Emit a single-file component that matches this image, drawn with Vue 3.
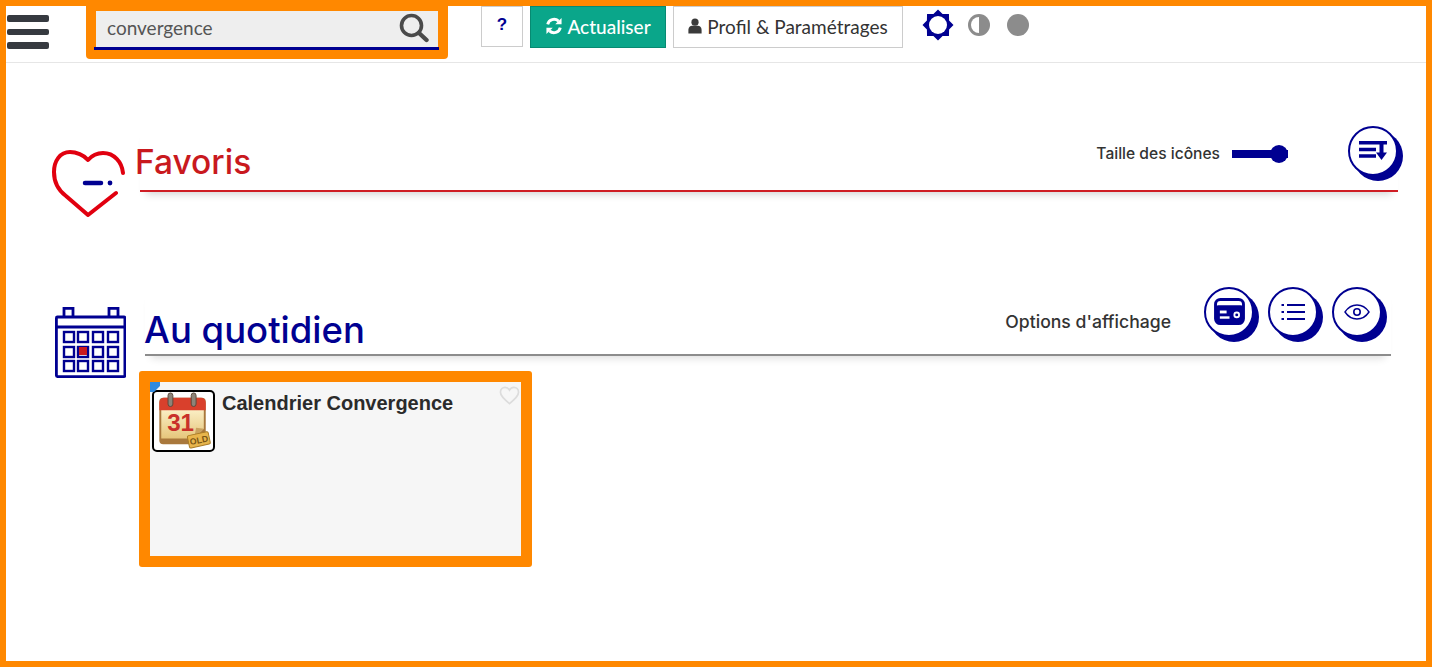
<template>
  <div class="page">
    <header class="topbar">
      <button class="burger" aria-label="Menu">
        <span></span><span></span><span></span>
      </button>
      <div class="search-focus">
        <div class="search">
          <div class="search-inner">
            <span class="search-text">convergence</span>
            <svg class="search-icon" viewBox="0 0 30 30" width="30" height="30">
              <circle cx="12.5" cy="12.5" r="10" fill="none" stroke="#4a4a4a" stroke-width="3.6" />
              <path d="M20 20l7.5 7" stroke="#4a4a4a" stroke-width="4.4" stroke-linecap="round" />
            </svg>
          </div>
        </div>
      </div>
      <button class="btn btn-help">?</button>
      <button class="btn btn-refresh">
        <svg viewBox="0 0 20 20" width="18" height="18">
          <path d="M3 8.2a7.2 7.2 0 0 1 12-3.6" fill="none" stroke="#fff" stroke-width="3.2" />
          <path d="M18.4 1v7h-7z" fill="#fff" />
          <path d="M17 11.8a7.2 7.2 0 0 1-12 3.6" fill="none" stroke="#fff" stroke-width="3.2" />
          <path d="M1.6 19v-7h7z" fill="#fff" />
        </svg>
        Actualiser
      </button>
      <button class="btn btn-profile">
        <svg viewBox="0 0 14 16" width="14" height="16">
          <circle cx="7" cy="4.2" r="3.6" fill="#3a3a3a" />
          <path d="M0.4 15.4v-3.6c0-2.6 2-4 3.6-4h6c1.600 0 3.600 1.400 3.600 4v3.600z" fill="#3a3a3a" />
        </svg>
        Profil &amp; Paramétrages
      </button>
      <div class="themes">
        <svg viewBox="0 0 32 32" width="32" height="32">
          <polygon :points="sunPoints" fill="#000091" />
          <circle cx="16" cy="16" r="9" fill="#fff" />
        </svg>
        <svg class="contrast" viewBox="0 0 22 22" width="22" height="22">
          <circle cx="11" cy="11" r="11" fill="#8c8c8c" />
          <path d="M11 3a8 8 0 0 0 0 16z" fill="#fff" />
        </svg>
        <span class="dot"></span>
      </div>
    </header>

    <section class="fav">
      <svg class="fav-icon" viewBox="0 0 73 67" width="73" height="67">
        <path
          d="M71 23C70 12 62 3 51 3c-6 0-11 2.500-15 7C32 5 24 2 18 2 8 2 2 11 2 22c0 10 4 18 12 24l22 19 28-22"
          fill="none"
          stroke="#e1000f"
          stroke-width="4"
          stroke-linecap="round"
          stroke-linejoin="round"
        />
        <path d="M33 33h16" stroke="#000091" stroke-width="4.500" stroke-linecap="round" />
        <circle cx="58" cy="33" r="2.400" fill="#000091" />
      </svg>
      <div class="head head-red">
        <h2 class="title-red">Favoris</h2>
        <div class="size-tool">
          <span class="label">Taille des icônes</span>
          <div class="slider"><i></i></div>
        </div>
        <button class="round round-sort" aria-label="Trier">
          <svg viewBox="0 0 28 19" width="28" height="19">
            <path d="M0 1.700h28M0 8.500h17M0 15h17" stroke="#000091" stroke-width="3.400" />
            <path d="M22.500 3v10" stroke="#000091" stroke-width="4" />
            <path d="M17 11.500h11L22.500 19z" fill="#000091" />
          </svg>
        </button>
      </div>
    </section>

    <section class="daily">
      <svg class="cal-icon" viewBox="0 0 71 71" width="71" height="71">
        <g fill="none" stroke="#000091" stroke-width="2.800">
          <rect x="1.400" y="10" width="68.500" height="59.600" rx="1" />
          <path d="M1.400 20h68.500" />
          <path d="M9 10V1.400h9V10M54 10V1.400h9V10" />
          <g stroke-width="2.400">
            <rect v-for="c in cells" :key="c.id" :x="c.x" :y="c.y" width="10" height="10" />
          </g>
        </g>
        <rect x="24" y="40" width="8" height="8" fill="#c9191e" />
      </svg>
      <div class="head head-grey">
        <h2 class="title-blue">Au quotidien</h2>
        <span class="label label-options">Options d'affichage</span>
        <div class="rounds">
          <button class="round" aria-label="Cartes">
            <svg viewBox="0 0 32 28" width="31" height="27">
              <rect x="1.500" y="1.500" width="29" height="25" rx="5" fill="none" stroke="#000091" stroke-width="3" />
              <rect x="1.500" y="7.500" width="29" height="19" rx="3" fill="#000091" />
              <rect x="6" y="13" width="7" height="3" fill="#fff" />
              <rect x="6" y="19" width="10" height="2.500" fill="#fff" />
              <circle cx="23.500" cy="17.500" r="3.400" fill="#fff" />
              <circle cx="23.500" cy="17.500" r="1.500" fill="#000091" />
            </svg>
          </button>
          <button class="round" aria-label="Liste">
            <svg viewBox="0 0 24 18" width="24" height="18">
              <path d="M6 2h18M6 9h18M6 16h18" stroke="#000091" stroke-width="2" />
              <path d="M0.500 2h2.500M0.500 9h2.500M0.500 16h2.500" stroke="#000091" stroke-width="2" />
            </svg>
          </button>
          <button class="round" aria-label="Aperçu">
            <svg viewBox="0 0 26 16" width="26" height="16">
              <path d="M1 8c3-4.500 7-7 12-7s9 2.500 12 7c-3 4.500-7 7-12 7S4 12.500 1 8z" fill="none" stroke="#000091" stroke-width="1.400" />
              <circle cx="13" cy="8" r="3.200" fill="none" stroke="#000091" stroke-width="1.600" />
            </svg>
          </button>
        </div>
      </div>
    </section>

    <article class="card-focus">
      <div class="card">
        <i class="corner"></i>
        <div class="app-icon">
          <svg viewBox="0 0 60 60" width="59" height="58">
            <defs>
              <linearGradient id="paper" x1="0" y1="0" x2="0" y2="1">
                <stop offset="0" stop-color="#fbf0c8" />
                <stop offset="1" stop-color="#e6c67c" />
              </linearGradient>
            </defs>
            <rect x="5" y="6" width="48" height="48" rx="4" fill="#a9783c" />
            <path d="M7 17h44v21L41 48H7z" fill="url(#paper)" />
            <path d="M41 48l2-11 8 1z" fill="#c9a25f" />
            <path d="M5 19v-8a5 5 0 0 1 5-5h38a5 5 0 0 1 5 5v8z" fill="#d9402c" />
            <rect x="14" y="1" width="5" height="14" rx="2.500" fill="#8d8478" stroke="#5b4a3c" />
            <rect x="38" y="1" width="5" height="14" rx="2.500" fill="#8d8478" stroke="#5b4a3c" />
            <text x="27" y="40" text-anchor="middle" class="day">31</text>
            <g transform="rotate(-12 46 50)">
              <rect x="35" y="43" width="22" height="13" rx="1.500" fill="#e8b54c" stroke="#a97b26" />
              <text x="46" y="53" text-anchor="middle" class="old">OLD</text>
            </g>
          </svg>
        </div>
        <h3 class="card-title">Calendrier Convergence</h3>
        <svg class="card-heart" viewBox="0 0 22 20" width="21" height="19">
          <path
            d="M11 18.500C5 13.500 1.500 10.500 1.500 6.500 1.500 3.500 3.800 1.500 6.300 1.500c2 0 3.700 1 4.700 2.800 1-1.800 2.700-2.800 4.700-2.800 2.500 0 4.800 2 4.800 5 0 4-3.500 7-9.500 12z"
            fill="none"
            stroke="#dcdcdc"
            stroke-width="1.800"
          />
        </svg>
      </div>
    </article>
  </div>
</template>

<script setup>
const xs = [9, 23, 38, 53]
const ys = [25, 40, 54]
const cells = ys.flatMap((y, r) => xs.map((x, c) => ({ id: r + "-" + c, x, y })))

// 8 spikes, so 16 points around the centre
const sunPoints = Array.from({ length: 16 }, (_, i) => {
  const r = i % 2 === 0 ? 15.5 : 12
  const a = (i * Math.PI) / 8 - Math.PI / 2
  return (16 + r * Math.cos(a)).toFixed(2) + "," + (16 + r * Math.sin(a)).toFixed(2)
}).join(" ")
</script>

<style>
html,
body {
  margin: 0;
  background: #fff;
}
</style>

<style scoped>
.page {
  box-sizing: border-box;
  width: 1432px;
  height: 667px;
  border: 6px solid #ff8800;
  background: #fff;
  overflow: hidden;
  font-family: Lato, "Liberation Sans", sans-serif;
  color: #2f2f2f;
}

button {
  font-family: inherit;
  padding: 0;
  cursor: pointer;
}

.topbar {
  display: flex;
  align-items: flex-start;
  height: 56px;
  border-bottom: 1px solid #e6e6e6;
}

.burger {
  display: flex;
  flex-direction: column;
  gap: 7px;
  width: 42px;
  margin: 9px 0 0 1px;
  background: none;
  border: none;
}

.burger span {
  display: block;
  height: 6.500px;
  border-radius: 2px;
  background: #363a40;
}

.search-focus {
  box-sizing: border-box;
  width: 362px;
  height: 53px;
  margin: 0 33px 0 37px;
  padding: 5px 9px 9px 8px;
  background: #ff8800;
  border-radius: 0 0 4px 4px;
}

.search {
  box-sizing: border-box;
  height: 39px;
  border-bottom: 3px solid #000091;
}

.search-inner {
  box-sizing: border-box;
  display: flex;
  align-items: center;
  justify-content: space-between;
  height: 36px;
  margin: 0 1px 0 2px;
  padding: 0 9px 3px 11px;
  background: #eeeeee;
}

.search-text {
  font-size: 19px;
  color: #555;
}

.search-icon {
  flex: none;
}

.btn {
  box-sizing: border-box;
  display: flex;
  align-items: center;
  justify-content: center;
  height: 42px;
  padding-bottom: 2px;
  font-size: 19px;
  background: #fff;
  border: 1px solid #cccccc;
}

.btn-help {
  width: 42px;
  height: 41px;
  font-family: "Liberation Sans", sans-serif;
  font-size: 17px;
  font-weight: 700;
  color: #000091;
  padding-bottom: 3px;
}

.btn-refresh {
  width: 136px;
  margin-left: 7px;
  gap: 4px;
  font-weight: 500;
  color: #fff;
  background: #0aa68a;
  border-color: #078a72;
}

.btn-profile {
  width: 230px;
  margin-left: 7px;
  gap: 5px;
  color: #333;
}

.themes {
  display: flex;
  align-items: center;
  height: 38px;
  margin-left: 19px;
}

.contrast {
  margin-left: 14px;
}

.dot {
  width: 22px;
  height: 22px;
  margin-left: 17px;
  border-radius: 50%;
  background: #8c8c8c;
}

.fav {
  display: flex;
  align-items: flex-start;
  margin: 63px 28px 0 46px;
}

.fav-icon {
  flex: none;
  margin-top: 24px;
}

.head {
  flex: 1;
  display: flex;
  align-items: center;
  position: relative;
}

.head-red {
  height: 64px;
  margin-left: 15px;
  border-bottom: 2px solid #cf1d24;
  box-shadow: 0 8px 8px -6px rgba(0, 0, 0, 0.18);
}

.title-red {
  margin: 7px 0 0 -5px;
  font-family: Inter, sans-serif;
  font-size: 33.500px;
  font-weight: 500;
  color: #c9191e;
}

.size-tool {
  display: flex;
  align-items: center;
  gap: 12px;
  margin: -9px 60px 0 auto;
}

.label {
  font-family: Inter, sans-serif;
  font-size: 15.600px;
  font-weight: 500;
  color: #333;
}

.slider {
  position: relative;
  width: 56px;
  height: 8px;
  background: #000091;
}

.slider i {
  position: absolute;
  top: -5px;
  right: 0;
  width: 18px;
  height: 18px;
  border-radius: 50%;
  background: #000091;
}

.round {
  box-sizing: border-box;
  flex: none;
  display: flex;
  align-items: center;
  justify-content: center;
  width: 50px;
  height: 50px;
  background: #fff;
  border: 2px solid #000091;
  border-radius: 50%;
  box-shadow: 5px 5px 0 #000091;
}

.round-sort {
  margin: -3px 0 12px 0;
}

.daily {
  display: flex;
  align-items: flex-start;
  height: 70px;
  margin: 69px 35px 0 49px;
}

.cal-icon {
  flex: none;
  margin-top: 21px;
}

.head-grey {
  height: 68px;
  margin-left: 19px;
  border-bottom: 2px solid #8c8c8c;
  box-shadow: 0 8px 8px -6px rgba(0, 0, 0, 0.14);
}

.title-blue {
  margin: 20px 0 0 -1px;
  font-family: Inter, sans-serif;
  font-size: 36.500px;
  font-weight: 500;
  color: #000091;
}

.label-options {
  margin: 2px 33px 0 auto;
  font-size: 17.600px;
}

.rounds {
  display: flex;
  gap: 14px;
  margin: -17px 9px 0 0;
}

.card-focus {
  box-sizing: border-box;
  width: 393px;
  height: 196px;
  margin: 15px 0 0 133px;
  padding: 11px;
  background: #ff8800;
  border-radius: 3px;
}

.card {
  display: flex;
  align-items: flex-start;
  position: relative;
  height: 174px;
  background: #f6f6f6;
}

.corner {
  position: absolute;
  top: 0;
  left: 0;
  width: 10px;
  height: 10px;
  background: #2f8ae0;
  clip-path: polygon(0 0, 100% 0, 100% 40%, 40% 100%, 0 100%);
}

.app-icon {
  box-sizing: border-box;
  display: flex;
  align-items: center;
  justify-content: center;
  flex: none;
  width: 63px;
  height: 62px;
  margin: 8px 0 0 2px;
  background: #fff;
  border: 2px solid #000;
  border-radius: 5px;
}

.day {
  font-family: "Liberation Sans", sans-serif;
  font-size: 25px;
  font-weight: 700;
  fill: #c9302a;
}

.old {
  font-family: "Liberation Sans", sans-serif;
  font-size: 9px;
  font-weight: 700;
  fill: #7a5413;
}

.card-title {
  margin: 10px 0 0 7px;
  font-family: "Liberation Sans", sans-serif;
  font-size: 20px;
  font-weight: 700;
  color: #2b2b2b;
}

.card-heart {
  position: absolute;
  top: 4px;
  right: 1px;
}
</style>
